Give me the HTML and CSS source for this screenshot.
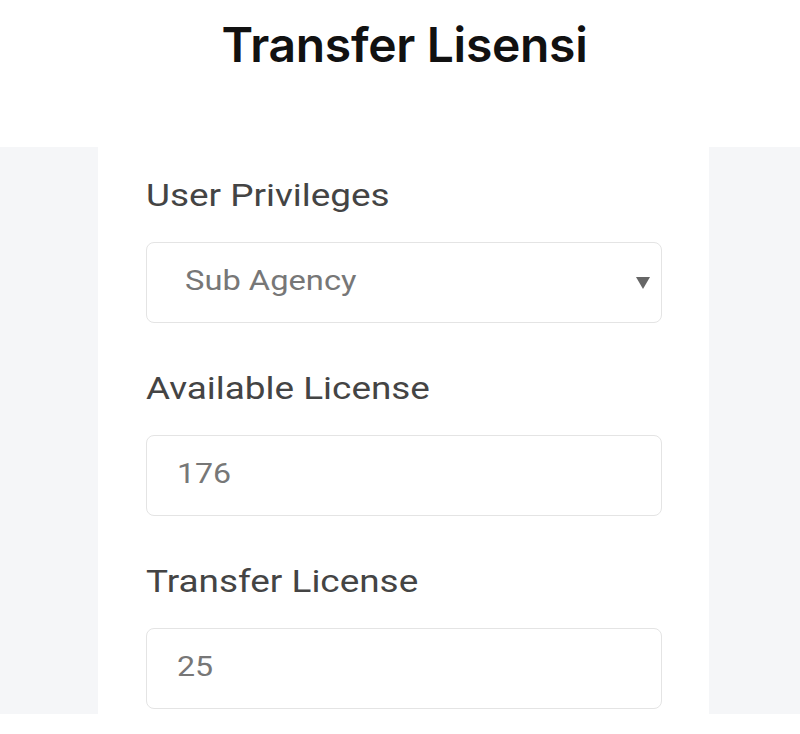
FILE: index.html
```html
<!DOCTYPE html>
<html lang="id">
<head>
<meta charset="utf-8">
<title>Transfer Lisensi</title>
<link rel="stylesheet" href="styles.css">
</head>
<body>
<header class="page-header">
  <h1 class="page-title">Transfer Lisensi</h1>
</header>
<div class="stage">
  <aside class="side"></aside>
  <main class="form-card">
    <div class="field">
      <label class="field-label"><span class="wide">User Privileges</span></label>
      <div class="control control-select">
        <span class="control-value select-value wide">Sub Agency</span>
        <span class="caret"></span>
      </div>
    </div>
    <div class="field">
      <label class="field-label"><span class="wide">Available License</span></label>
      <div class="control">
        <span class="control-value wide">176</span>
      </div>
    </div>
    <div class="field">
      <label class="field-label"><span class="wide">Transfer License</span></label>
      <div class="control">
        <span class="control-value wide">25</span>
      </div>
    </div>
  </main>
  <aside class="side"></aside>
</div>
</body>
</html>
```
FILE: styles.css
```css
* { box-sizing: border-box; }
html, body { margin: 0; padding: 0; background: #ffffff; }
body { font-family: Roboto, "Liberation Sans", sans-serif; }

.page-header {
  height: 147px;
  display: flex;
  justify-content: center;
  padding-top: 15px;
  padding-left: 9px;
}
.page-title {
  margin: 0;
  font-family: Inter, "Noto Sans", sans-serif;
  font-weight: 600;
  font-size: 48px;
  line-height: 60px;
  color: #111111;
  letter-spacing: -0.3px;
}

.stage {
  display: flex;
  height: 567px;
}
.side {
  background: #f5f6f8;
}
.side:first-child { width: 98px; }
.side:last-child { width: 91px; }

.form-card {
  flex: 1;
  background: #ffffff;
  padding: 31px 47px 0 48px;
  display: flex;
  flex-direction: column;
  gap: 48px;
}

.field { display: flex; flex-direction: column; gap: 28px; }

.field-label {
  font-size: 31px;
  line-height: 36px;
  color: #444444;
}

.wide {
  display: inline-block;
  transform: scaleX(1.19);
  transform-origin: left center;
}

.control {
  height: 81px;
  border: 1.5px solid #e4e4e4;
  border-radius: 8px;
  display: flex;
  align-items: center;
  padding: 0 0 4px 30px;
  background: #ffffff;
}
.control-select { padding-left: 38px; padding-right: 11px; justify-content: space-between; }
.control-value {
  font-size: 27px;
  line-height: 32px;
  color: #777777;
}
.select-value { transform: scaleX(1.21); }
.caret {
  width: 0;
  height: 0;
  border-left: 7px solid transparent;
  border-right: 7px solid transparent;
  border-top: 12px solid #666666;
  margin-top: 4px;
}
```
